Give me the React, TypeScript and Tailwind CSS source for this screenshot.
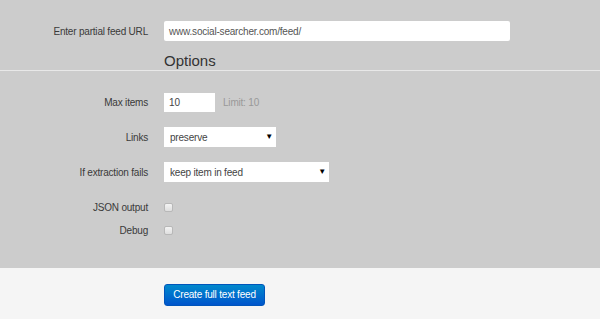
const Row = ({ label, children, className }: any) => (
  <div className={`flex items-center ${className}`}>
    <label className="w-[148px] text-right text-[10px] tracking-[-0.2px] text-[#3a3a3a]">{label}</label>
    <div className="ml-4 flex items-center">{children}</div>
  </div>
);

const Select = ({ value, width }: any) => (
  <div
    className={`flex h-[20px] items-center justify-between bg-white pl-[6px] pr-[3px] text-[10px] tracking-[-0.2px] text-[#444] ${width}`}
  >
    <span>{value}</span>
    <span className="text-[8px] text-black">▼</span>
  </div>
);

const Check = () => (
  <div className="h-[9px] w-[9px] rounded-[2px] border border-[#b8b8b8] bg-gradient-to-b from-[#f4f4f4] to-[#dedede]" />
);

export default function App() {
  return (
    <div className="h-[319px] w-[600px] bg-[#cccccc] font-['Liberation_Sans',Arial,sans-serif]">
      <div className="pt-[21px]">
        <Row label="Enter partial feed URL">
          <div className="flex h-[20px] w-[346px] items-center rounded-[2px] bg-white px-[5px] text-[10px] tracking-[-0.2px] text-[#555]">
            www.social-searcher.com/feed/
          </div>
        </Row>
        <div className="ml-[164px] mt-[11px] h-[18px] text-[15px] leading-[18px] text-[#333]">Options</div>
        <div className="h-px bg-[#e8e8e8]" />
      </div>
      <div className="h-[197px] pt-[22px]">
        <Row label="Max items">
          <div className="flex h-[19px] w-[51px] items-center bg-white px-[5px] text-[10px] text-[#444]">10</div>
          <span className="ml-[8px] text-[10px] tracking-[-0.2px] text-[#999]">Limit: 10</span>
        </Row>
        <Row label="Links" className="mt-[15px]">
          <Select value="preserve" width="w-[112px]" />
        </Row>
        <Row label="If extraction fails" className="mt-[15px]">
          <Select value="keep item in feed" width="w-[165px]" />
        </Row>
        <Row label="JSON output" className="mt-[18px]">
          <Check />
        </Row>
        <Row label="Debug" className="mt-[8px]">
          <Check />
        </Row>
      </div>
      <div className="h-[51px] bg-[#f5f5f5] pl-[164px] pt-[13px]">
        <button className="h-[22px] w-[101px] rounded-[3px] border border-[#0055bb] bg-gradient-to-b from-[#0088cc] to-[#0055cc] text-[10px] tracking-[-0.2px] text-white">
          Create full text feed
        </button>
      </div>
    </div>
  );
}
